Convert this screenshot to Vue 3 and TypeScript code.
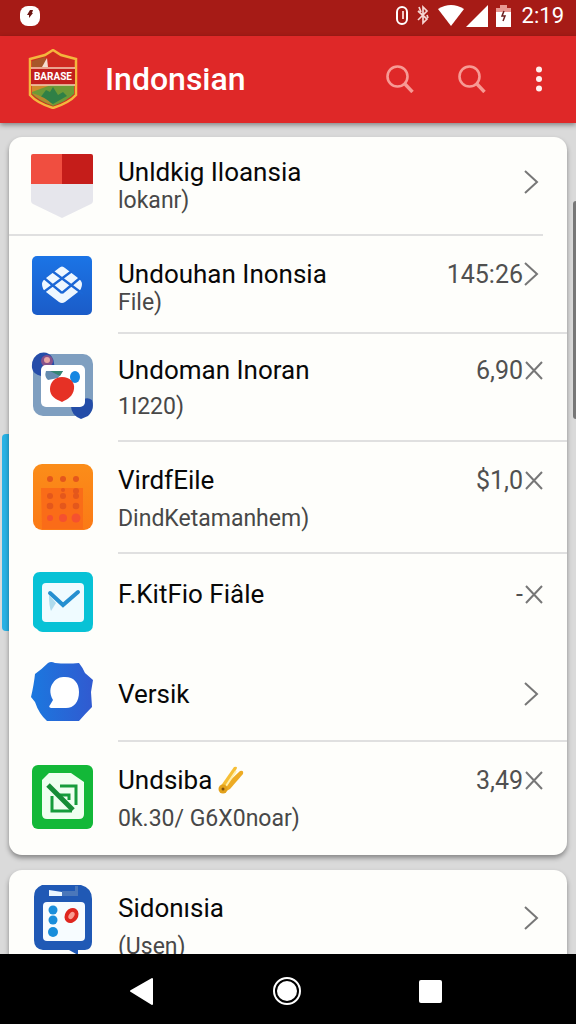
<script setup lang="ts">
interface Item {
  id: string
  icon: string
  title: string
  sub?: string
  value?: string
  action: 'open' | 'remove'
  layout: string
  pencil?: boolean
}

const mainItems: Item[] = [
  { id: 'a', icon: 'flag', title: 'Unldkig Iloansia', sub: 'lokanr)', action: 'open', layout: 'first tight' },
  { id: 'b', icon: 'weave', title: 'Undouhan Inonsia', sub: 'File)', value: '145:26', action: 'open', layout: 'tight' },
  { id: 'c', icon: 'photo', title: 'Undoman Inoran', sub: '1I220)', value: '6,90', action: 'remove', layout: 'medium' },
  { id: 'd', icon: 'keypad', title: 'VirdfEile', sub: 'DindKetamanhem)', value: '$1,0', action: 'remove', layout: 'tall' },
  { id: 'e', icon: 'mail', title: 'F.KitFio Fiâle', value: '-', action: 'remove', layout: 'single open-end' },
  { id: 'f', icon: 'chat', title: 'Versik', action: 'open', layout: 'centered' },
  { id: 'g', icon: 'sheet', title: 'Undsiba', sub: '0k.30/ G6X0noar)', value: '3,49', action: 'remove', layout: 'tall last', pencil: true },
]

const moreItems: Item[] = [
  { id: 'h', icon: 'board', title: 'Sidonısia', sub: '(Usen)', action: 'open', layout: 'tall last lead' },
]

const groups = [mainItems, moreItems]
</script>

<template>
  <div class="screen">
    <div class="status">
      <svg class="notice" viewBox="0 0 20 20" aria-hidden="true">
        <rect width="20" height="20" rx="8" fill="#fff" />
        <path d="M10 4h3l-1 3h1l-4 5V9H7z" fill="#6b1512" />
      </svg>
      <svg class="signals" viewBox="0 0 120 24" aria-hidden="true">
        <rect x="3" y="3" width="10" height="17" rx="5" fill="none" stroke="#fff" stroke-width="2" />
        <path d="M9 7v8" stroke="#f6c7c2" stroke-width="2" />
        <path d="M24 7l9 8-4 4V3l4 4-9 9M25 3l2 5M33 11l1 3" fill="none" stroke="#f6d5d2" stroke-width="1.700" />
        <path d="M44 5q13-8 26 0L57 22z" fill="#fff" />
        <path d="M94 1v22H72z" fill="#fff" />
        <path d="M103 4h3V1h7v3h4v4h-15V4z" fill="#e89993" />
        <path d="M102 8h15v15h-15z" fill="#fff" />
        <path d="M110 7l-2 5h3l-2 5" fill="none" stroke="#6b2020" stroke-width="1.500" />
      </svg>
      <span class="time">2:19</span>
    </div>

    <header class="appbar">
      <svg class="crest" viewBox="0 0 50 60" aria-hidden="true">
        <path d="M25 1l8 5 15 4v36q-7 8-23 13Q9 54 2 46V10l15-4z" fill="#cf2a20" stroke="#f4b63d" stroke-width="2.500" />
        <path d="M4 12l13-4 3 10H4z" fill="#a8572a" />
        <path d="M14 18l5-9 1 9z" fill="#f6ded0" />
        <path d="M4 36h42v9q-7 7-21 12Q11 52 4 45z" fill="#6d9a37" />
        <path d="M4 36h19L4 43z" fill="#d08a2c" />
        <path d="M12 49l6-8 4 2 3-5 5 8 5-3 4 4-14 8z" fill="#2f8046" />
        <path d="M4 44q14 4 21 12-14-4-21-12z" fill="#b58a2e" />
        <rect x="3" y="20" width="44" height="15" fill="#c21f1d" />
        <path d="M3 19h44M3 36h44" stroke="#f3cdb4" stroke-width="1.500" />
        <text x="25" y="31" text-anchor="middle" class="crest-text">BARASE</text>
      </svg>
      <h1>Indonsian</h1>
      <div class="tools">
        <button v-for="n in 2" :key="n" type="button" aria-label="Search">
          <svg class="search" viewBox="0 0 28 28" aria-hidden="true">
            <circle cx="11.500" cy="11.500" r="10" fill="none" stroke="#f79a94" stroke-width="2.600" />
            <path d="M18.500 18.500l8 8.500" stroke="#f79a94" stroke-width="3.400" />
          </svg>
        </button>
        <button type="button" class="more" aria-label="More options">
          <svg viewBox="0 0 8 28" aria-hidden="true">
            <g fill="#fff0ee"><circle cx="4" cy="4.500" r="3" /><circle cx="4" cy="14" r="3" /><circle cx="4" cy="23.500" r="3" /></g>
          </svg>
        </button>
      </div>
    </header>

    <main class="content">
      <span class="edge-tab"></span>
      <span class="scroll-thumb"></span>
      <ul v-for="(group, g) in groups" :key="g" class="card">
        <li v-for="item in group" :key="item.id" class="row" :class="item.layout">
          <svg v-if="item.icon === 'flag'" class="icon" viewBox="0 0 62 66" aria-hidden="true">
            <path d="M0 31h62v17q0 2-2 3L31 65 2 51q-2-1-2-3z" fill="#e6e6ec" />
            <path d="M2 1h29v30H0V3q0-2 2-2z" fill="#f04e40" />
            <path d="M31 1h29q2 0 2 2v28H31z" fill="#c51d1a" />
          </svg>
          <svg v-else-if="item.icon === 'weave'" class="icon" viewBox="0 0 62 66" aria-hidden="true">
            <defs>
              <linearGradient id="weave-bg" x2="0" y2="1"><stop stop-color="#1b74e6" /><stop offset="1" stop-color="#1b5cc8" /></linearGradient>
            </defs>
            <rect x="1" y="2" width="60" height="59" rx="5" fill="url(#weave-bg)" />
            <path d="M28 14q3-3 6 0l13 10q4 3 4 6 0 5-4 8L34 48q-3 2-6 0L15 38q-4-3-4-8 0-3 4-6z" fill="#eef7ff" />
            <path d="M21 17l31 23M13 24l18 15M41 17L10 40M49 24L31 39" fill="none" stroke="#1b67d6" stroke-width="2.300" />
          </svg>
          <svg v-else-if="item.icon === 'photo'" class="icon" viewBox="0 0 62 68" aria-hidden="true">
            <rect x="2" y="2" width="60" height="62" rx="10" fill="#7f9fc0" />
            <path d="M1 16Q0 5 9 1q8-2 12 4 3 4 2 11l-13 8q-8-2-9-8z" fill="#264da9" />
            <circle cx="16" cy="9" r="6" fill="#86518a" /><circle cx="16" cy="8" r="3" fill="#e7a6a5" />
            <path d="M40 54q9 4 13-7 4-2 8 1 3 9-4 16l-7 3q-10-4-10-13z" fill="#244da8" />
            <rect x="10" y="13" width="44" height="42" rx="5" fill="#fff" />
            <path d="M15 19h17l-5 7-10 2q-4-3-2-9z" fill="#668caf" /><path d="M19 19h13l-3 5z" fill="#368574" />
            <ellipse cx="44" cy="25" rx="5" ry="6" fill="#1586e2" />
            <path d="M31 25c8 0 13 5 12 12s-6 10-12 13c-7-3-12-6-12-13s5-12 12-12z" fill="#e63125" />
          </svg>
          <svg v-else-if="item.icon === 'keypad'" class="icon" viewBox="0 0 62 68" aria-hidden="true">
            <defs><linearGradient id="keypad-bg" x2="0" y2="1"><stop stop-color="#fb8d19" /><stop offset="1" stop-color="#fb7a16" /></linearGradient></defs>
            <rect x="2" y="0" width="60" height="66" rx="9" fill="url(#keypad-bg)" />
            <path d="M10 24h42v41H11z" fill="#fa6c18" />
            <g fill="#e4571c">
              <circle v-for="n in 3" :key="n" :cx="6 + n * 13" cy="15" r="3" />
              <circle v-for="n in 3" :key="n + 3" :cx="6 + n * 13" cy="32" r="3" />
              <circle v-for="n in 3" :key="n + 6" :cx="6 + n * 13" cy="42" r="3.300" />
              <circle cx="32" cy="26" r="2" /><circle cx="45" cy="27" r="3" />
            </g>
            <g fill="#f5512f"><circle cx="19" cy="54" r="3" /><circle cx="32" cy="54" r="4" /><circle cx="45" cy="54" r="4.500" /></g>
          </svg>
          <svg v-else-if="item.icon === 'mail'" class="icon" viewBox="0 0 62 66" aria-hidden="true">
            <path d="M9 0h46q7 0 7 8v44q0 8-8 8H12q-4 0-6-3-4-2-4-5V8q0-8 7-8z" fill="#08c2d6" />
            <rect x="11" y="11" width="42" height="39" rx="4" fill="#effbff" />
            <path d="M18 23l7 8-5 8q-2-5-2-16z" fill="#afdced" />
            <path d="M19 21l13 12 15-13" fill="none" stroke="#258fd0" stroke-width="4" stroke-linecap="round" />
          </svg>
          <svg v-else-if="item.icon === 'chat'" class="icon" viewBox="0 0 62 62" aria-hidden="true">
            <defs><linearGradient id="chat-bg"><stop stop-color="#1b78df" /><stop offset="1" stop-color="#315ad0" /></linearGradient></defs>
            <path d="M17 1q3-2 7 0 12 1 24 0 4 5 6 10l8 7-2 12 1 15q-6 6-13 14H16q-8-7-12-19L0 35q3-13 4-23 7-5 13-11z" fill="url(#chat-bg)" />
            <path d="M20 46q-3-1-1-3l3-5c-4-7-3-13 0-17 3-5 7-6 12-6 9 0 14 6 14 15 0 10-5 16-13 16z" fill="#fff" />
          </svg>
          <svg v-else-if="item.icon === 'sheet'" class="icon" viewBox="0 0 62 66" aria-hidden="true">
            <rect x="1" y="1" width="61" height="64" rx="6" fill="#13b838" />
            <path d="M18 9h22l13 9v32q0 5-5 5H16q-5 0-5-5V16z" fill="#effff0" />
            <path d="M29 22h16v19M21 32v15h20M29 31h9v5" fill="none" stroke="#169c3b" stroke-width="3" />
            <path d="M17 21l25 25" stroke="#168c36" stroke-width="5" />
          </svg>
          <svg v-else class="icon" viewBox="0 0 62 70" aria-hidden="true">
            <path d="M11 0h39q11 3 11 14v43q0 7-7 8h-7v5l-9-5H12q-9-1-9-10V12Q3 3 11 0z" fill="#2059b5" />
            <path d="M18 5l13 2h14v4H18z" fill="#eaf6ff" /><path d="M31 6h13V1h3v10H31z" fill="#4a77ba" />
            <rect x="12" y="17" width="42" height="39" rx="4" fill="#f7fcff" />
            <g fill="#198edb"><circle cx="22" cy="25" r="4.500" /><circle cx="22" cy="35" r="4.500" /><circle cx="22" cy="47" r="5" /></g>
            <ellipse cx="40.500" cy="30.500" rx="4.500" ry="6" transform="rotate(35 40.500 30.500)" fill="#f99b91" stroke="#df261f" stroke-width="4" />
          </svg>

          <div class="body">
            <div class="texts">
              <p class="title">
                {{ item.title }}
                <svg v-if="item.pencil" class="pencil" viewBox="0 0 26 28" aria-hidden="true">
                  <path d="M16 1q3-1 3 1L9 21l-6 5-1-5z" fill="#f6bf36" />
                  <path d="M22 5q4-1 3 3L12 23l-7 4-2-4z" fill="#edab24" />
                  <path d="M18 5L8 20" stroke="#fff0ad" stroke-width="2" />
                  <circle cx="5" cy="23" r="4.500" fill="#e2a11b" /><circle cx="5" cy="23" r="1.500" fill="#80510c" />
                </svg>
              </p>
              <p v-if="item.sub" class="sub">{{ item.sub }}</p>
            </div>
            <div class="trail" :class="{ middle: !item.value }">
              <span v-if="item.value">{{ item.value }}</span>
              <button type="button" :aria-label="(item.action === 'open' ? 'Open ' : 'Remove ') + item.title">
                <svg viewBox="0 0 20 26" aria-hidden="true">
                  <path v-if="item.action === 'open'" d="M2 2l12 11L2 24" />
                  <path v-else d="M3 5l16 17M19 5L3 22" />
                </svg>
              </button>
            </div>
          </div>
        </li>
      </ul>
    </main>

    <nav class="navbar">
      <button type="button" aria-label="Back">
        <svg viewBox="0 0 28 28" aria-hidden="true"><path d="M2 14L23 2v25z" fill="#fff" stroke="#fff" stroke-width="2" stroke-linejoin="round" /></svg>
      </button>
      <button type="button" aria-label="Home">
        <svg viewBox="0 0 28 28" aria-hidden="true"><circle cx="14" cy="14" r="13" fill="none" stroke="#fff" stroke-width="2" /><circle cx="14" cy="14" r="10" fill="#fff" /></svg>
      </button>
      <button type="button" aria-label="Recent apps">
        <svg viewBox="0 0 28 28" aria-hidden="true"><rect x="2" y="3" width="23" height="23" rx="2" fill="#fff" /></svg>
      </button>
    </nav>
  </div>
</template>

<style>
body {
  margin: 0;
}
</style>

<style scoped>
.screen {
  display: flex;
  flex-direction: column;
  height: 100vh;
  overflow: hidden;
  background: #dadada;
  color: #080808;
  font-family: Roboto, "Noto Sans", sans-serif;
}
svg {
  display: block;
  flex: none;
}
button {
  display: flex;
  padding: 0;
  border: 0;
  background: none;
  cursor: pointer;
}
h1, p, ul {
  margin: 0;
  padding: 0;
}
.status {
  display: flex;
  flex: none;
  align-items: center;
  box-sizing: border-box;
  height: 36px;
  padding: 0 12px 4px 20px;
  background: #a61b16;
  color: #fff;
}
.notice {
  width: 20px;
  height: 20px;
}
.signals {
  width: 120px;
  height: 24px;
  margin-left: auto;
}
.time {
  margin-left: 8px;
  font-size: 22px;
  line-height: 32px;
}
.appbar {
  position: relative;
  z-index: 1;
  display: flex;
  flex: none;
  align-items: center;
  box-sizing: border-box;
  height: 87px;
  padding: 0 32px 2px 28px;
  background: #df2828;
  box-shadow: 0 2px 5px rgba(0, 0, 0, 0.4);
}
.crest {
  width: 50px;
  height: 60px;
}
.crest-text {
  fill: #fff;
  font-size: 10px;
  font-weight: 700;
}
h1 {
  margin-left: 27px;
  color: #fff;
  font-size: 32px;
  font-weight: 500;
  line-height: 36px;
}
.tools {
  display: flex;
  gap: 44px;
  align-items: center;
  margin-left: auto;
}
.search {
  width: 28px;
  height: 28px;
}
.more {
  margin-left: 4px;
}
.more svg {
  width: 10px;
  height: 28px;
}
.content {
  position: relative;
  display: flex;
  flex: 1;
  flex-direction: column;
  gap: 15px;
  min-height: 0;
  padding: 14px 9px 0;
  overflow: hidden;
}
.edge-tab,
.scroll-thumb {
  position: absolute;
}
.edge-tab {
  top: 311px;
  left: 2px;
  width: 12px;
  height: 197px;
  border-radius: 4px;
  background: #29b3e6;
}
.scroll-thumb {
  top: 78px;
  right: 0;
  width: 3px;
  height: 218px;
  border-radius: 3px 0 0 3px;
  background: #777;
}
.card {
  position: relative;
  flex: none;
  border-radius: 13px;
  background: #fefefb;
  box-shadow: 0 3px 5px rgba(0, 0, 0, 0.38);
  list-style: none;
}
.row {
  display: flex;
  gap: 25px;
  padding-left: 22px;
}
.icon {
  width: 62px;
  margin-top: 18px;
  align-self: flex-start;
}
.body {
  display: flex;
  flex: 1;
  justify-content: space-between;
  min-width: 0;
  padding: 24px 24px 18px 0;
  border-bottom: 2px solid #e0e0e0;
}
.title {
  display: flex;
  gap: 6px;
  font-size: 26px;
  line-height: 28px;
}
.sub {
  margin-top: 10px;
  color: #484848;
  font-size: 23px;
  line-height: 30px;
}
.pencil {
  width: 26px;
  height: 28px;
}
.trail {
  display: flex;
  align-items: center;
  align-self: flex-start;
  height: 28px;
  color: #505050;
  font-size: 25px;
}
.trail.middle {
  margin-top: 10px;
}
.trail svg {
  width: 20px;
  height: 26px;
  fill: none;
  stroke: #777;
  stroke-width: 2;
}
.tight .body {
  padding-bottom: 14px;
}
.tight .sub {
  margin-top: 0;
}
.first {
  margin-right: 24px;
  border-bottom: 2px solid #e0e0e0;
}
.first .icon {
  margin-top: 16px;
}
.first .body {
  padding: 21px 0 18px;
  border-bottom: 0;
}
.medium .body {
  padding-top: 22px;
}
.medium .sub {
  margin-top: 8px;
}
.tall .icon {
  margin-top: 22px;
}
.single .body {
  padding: 26px 24px 36px 0;
}
.centered .body {
  padding: 36px 24px 32px 0;
}
.centered .trail.middle {
  margin-top: 0;
}
.last .body {
  padding-bottom: 21px;
}
.last .body,
.open-end .body {
  border-bottom: 0;
}
.tall.lead .icon {
  margin-top: 15px;
}
.navbar {
  position: relative;
  z-index: 1;
  display: flex;
  flex: none;
  align-items: center;
  justify-content: center;
  gap: 116px;
  box-sizing: border-box;
  height: 70px;
  padding: 4px 3px 0 0;
  background: #000;
}
.navbar svg {
  width: 28px;
  height: 28px;
}
</style>
